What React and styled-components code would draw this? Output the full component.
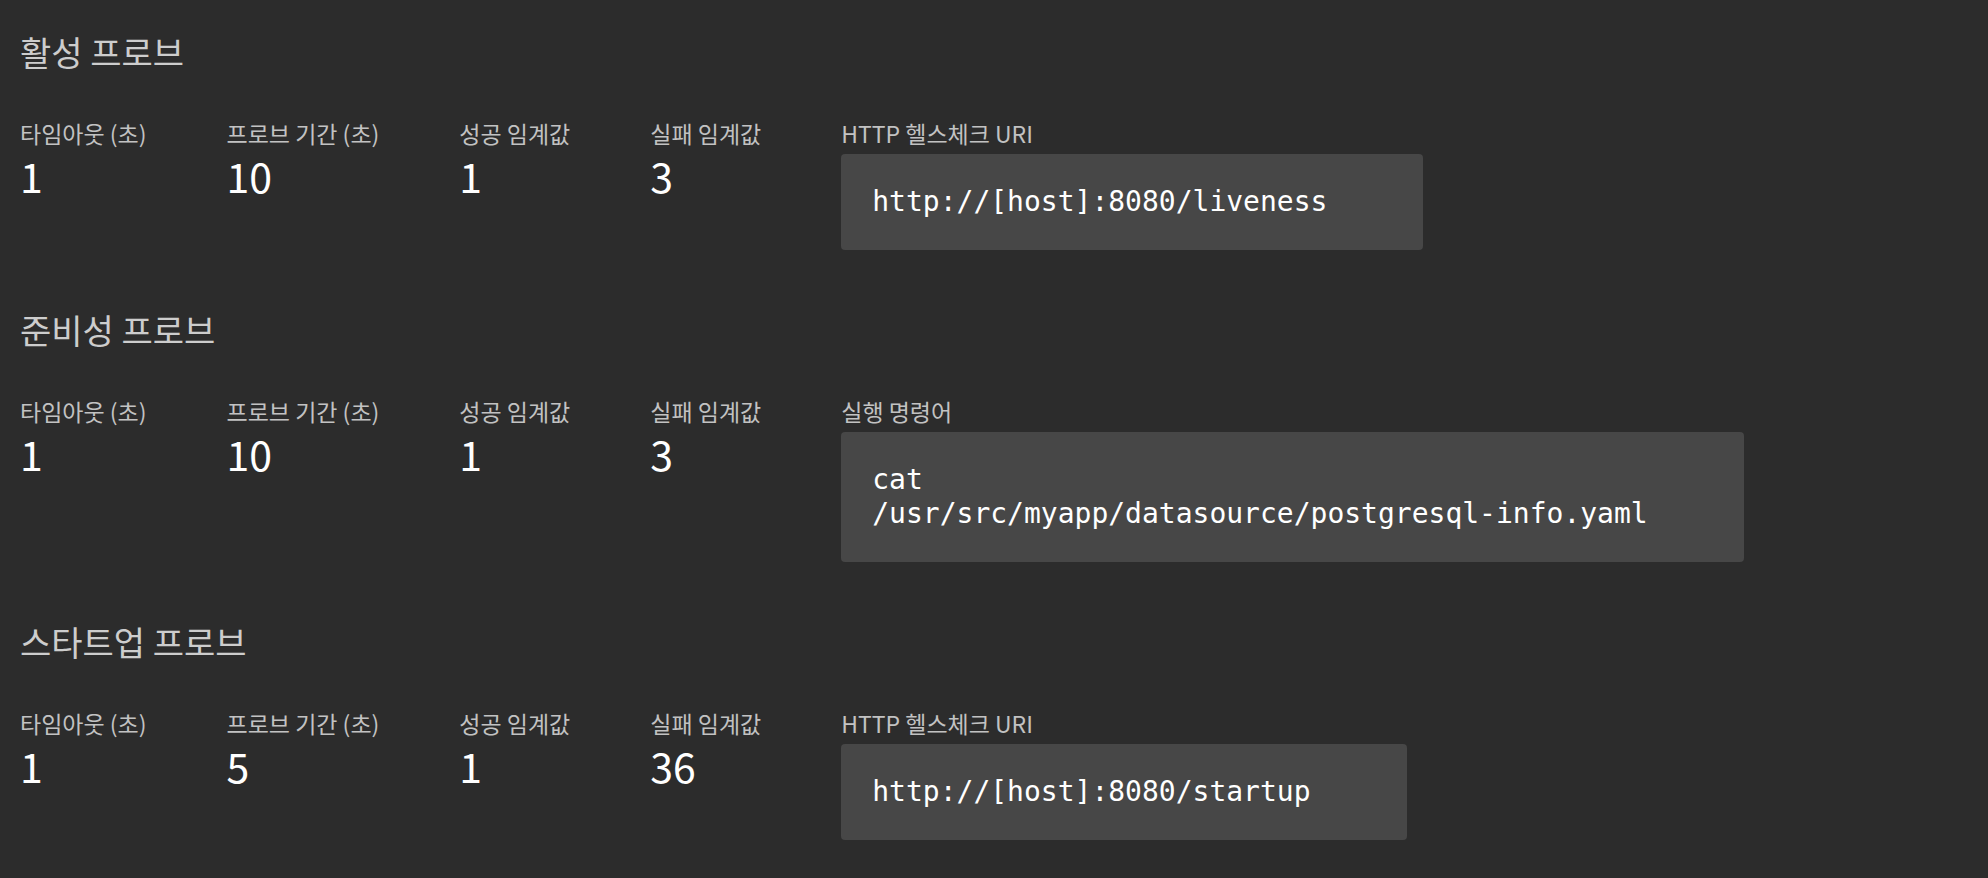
import React from 'react';
import styled, { createGlobalStyle } from 'styled-components';

const GlobalStyle = createGlobalStyle`
  html, body {
    margin: 0;
    padding: 0;
    background: #2c2c2c;
  }
  body {
    font-family: "Noto Sans CJK KR", "Noto Sans", sans-serif;
  }
`;

const Page = styled.div`
  min-height: 878px;
  padding: 32px 20px;
  box-sizing: border-box;
  background: #2c2c2c;
  display: flex;
  flex-direction: column;
  gap: 60px;
`;

const Section = styled.section`
  display: flex;
  flex-direction: column;
  gap: 47px;
`;

const SectionTitle = styled.h2`
  margin: 0;
  font-size: 34px;
  line-height: 40px;
  font-weight: 400;
  color: #cdcdcd;
`;

const FieldRow = styled.div`
  display: flex;
  align-items: flex-start;
  gap: 80px;
`;

const Field = styled.div`
  display: flex;
  flex-direction: column;
  gap: ${(p) => (p.$code ? '7px' : '6px')};
`;

const Label = styled.div`
  font-size: 23px;
  line-height: 28px;
  color: #c2c2c2;
  white-space: nowrap;
`;

const Value = styled.div`
  font-size: 41px;
  line-height: 44px;
  color: #ffffff;
`;

const CodeBox = styled.div`
  box-sizing: border-box;
  padding: 31px 96px 31px 31px;
  background: #474747;
  border-radius: 4px;
  font-family: "DejaVu Sans Mono", "Liberation Mono", monospace;
  font-size: 28px;
  line-height: 34px;
  color: #ffffff;
`;

const CodeLine = styled.div`
  white-space: nowrap;
`;

const probes = [
  {
    title: '활성 프로브',
    timeout: 1,
    period: 10,
    success: 1,
    failure: 3,
    checkLabel: 'HTTP 헬스체크 URI',
    check: ['http://[host]:8080/liveness'],
  },
  {
    title: '준비성 프로브',
    timeout: 1,
    period: 10,
    success: 1,
    failure: 3,
    checkLabel: '실행 명령어',
    check: ['cat', '/usr/src/myapp/datasource/postgresql-info.yaml'],
  },
  {
    title: '스타트업 프로브',
    timeout: 1,
    period: 5,
    success: 1,
    failure: 36,
    checkLabel: 'HTTP 헬스체크 URI',
    check: ['http://[host]:8080/startup'],
  },
];

function Probe({ probe }) {
  return (
    <Section>
      <SectionTitle>{probe.title}</SectionTitle>
      <FieldRow>
        <Field>
          <Label>타임아웃 (초)</Label>
          <Value>{probe.timeout}</Value>
        </Field>
        <Field>
          <Label>프로브 기간 (초)</Label>
          <Value>{probe.period}</Value>
        </Field>
        <Field>
          <Label>성공 임계값</Label>
          <Value>{probe.success}</Value>
        </Field>
        <Field>
          <Label>실패 임계값</Label>
          <Value>{probe.failure}</Value>
        </Field>
        <Field $code>
          <Label>{probe.checkLabel}</Label>
          <CodeBox>
            {probe.check.map((line, i) => (
              <CodeLine key={i}>{line}</CodeLine>
            ))}
          </CodeBox>
        </Field>
      </FieldRow>
    </Section>
  );
}

export default function App() {
  return (
    <>
      <GlobalStyle />
      <Page>
        {probes.map((p) => (
          <Probe key={p.title} probe={p} />
        ))}
      </Page>
    </>
  );
}
